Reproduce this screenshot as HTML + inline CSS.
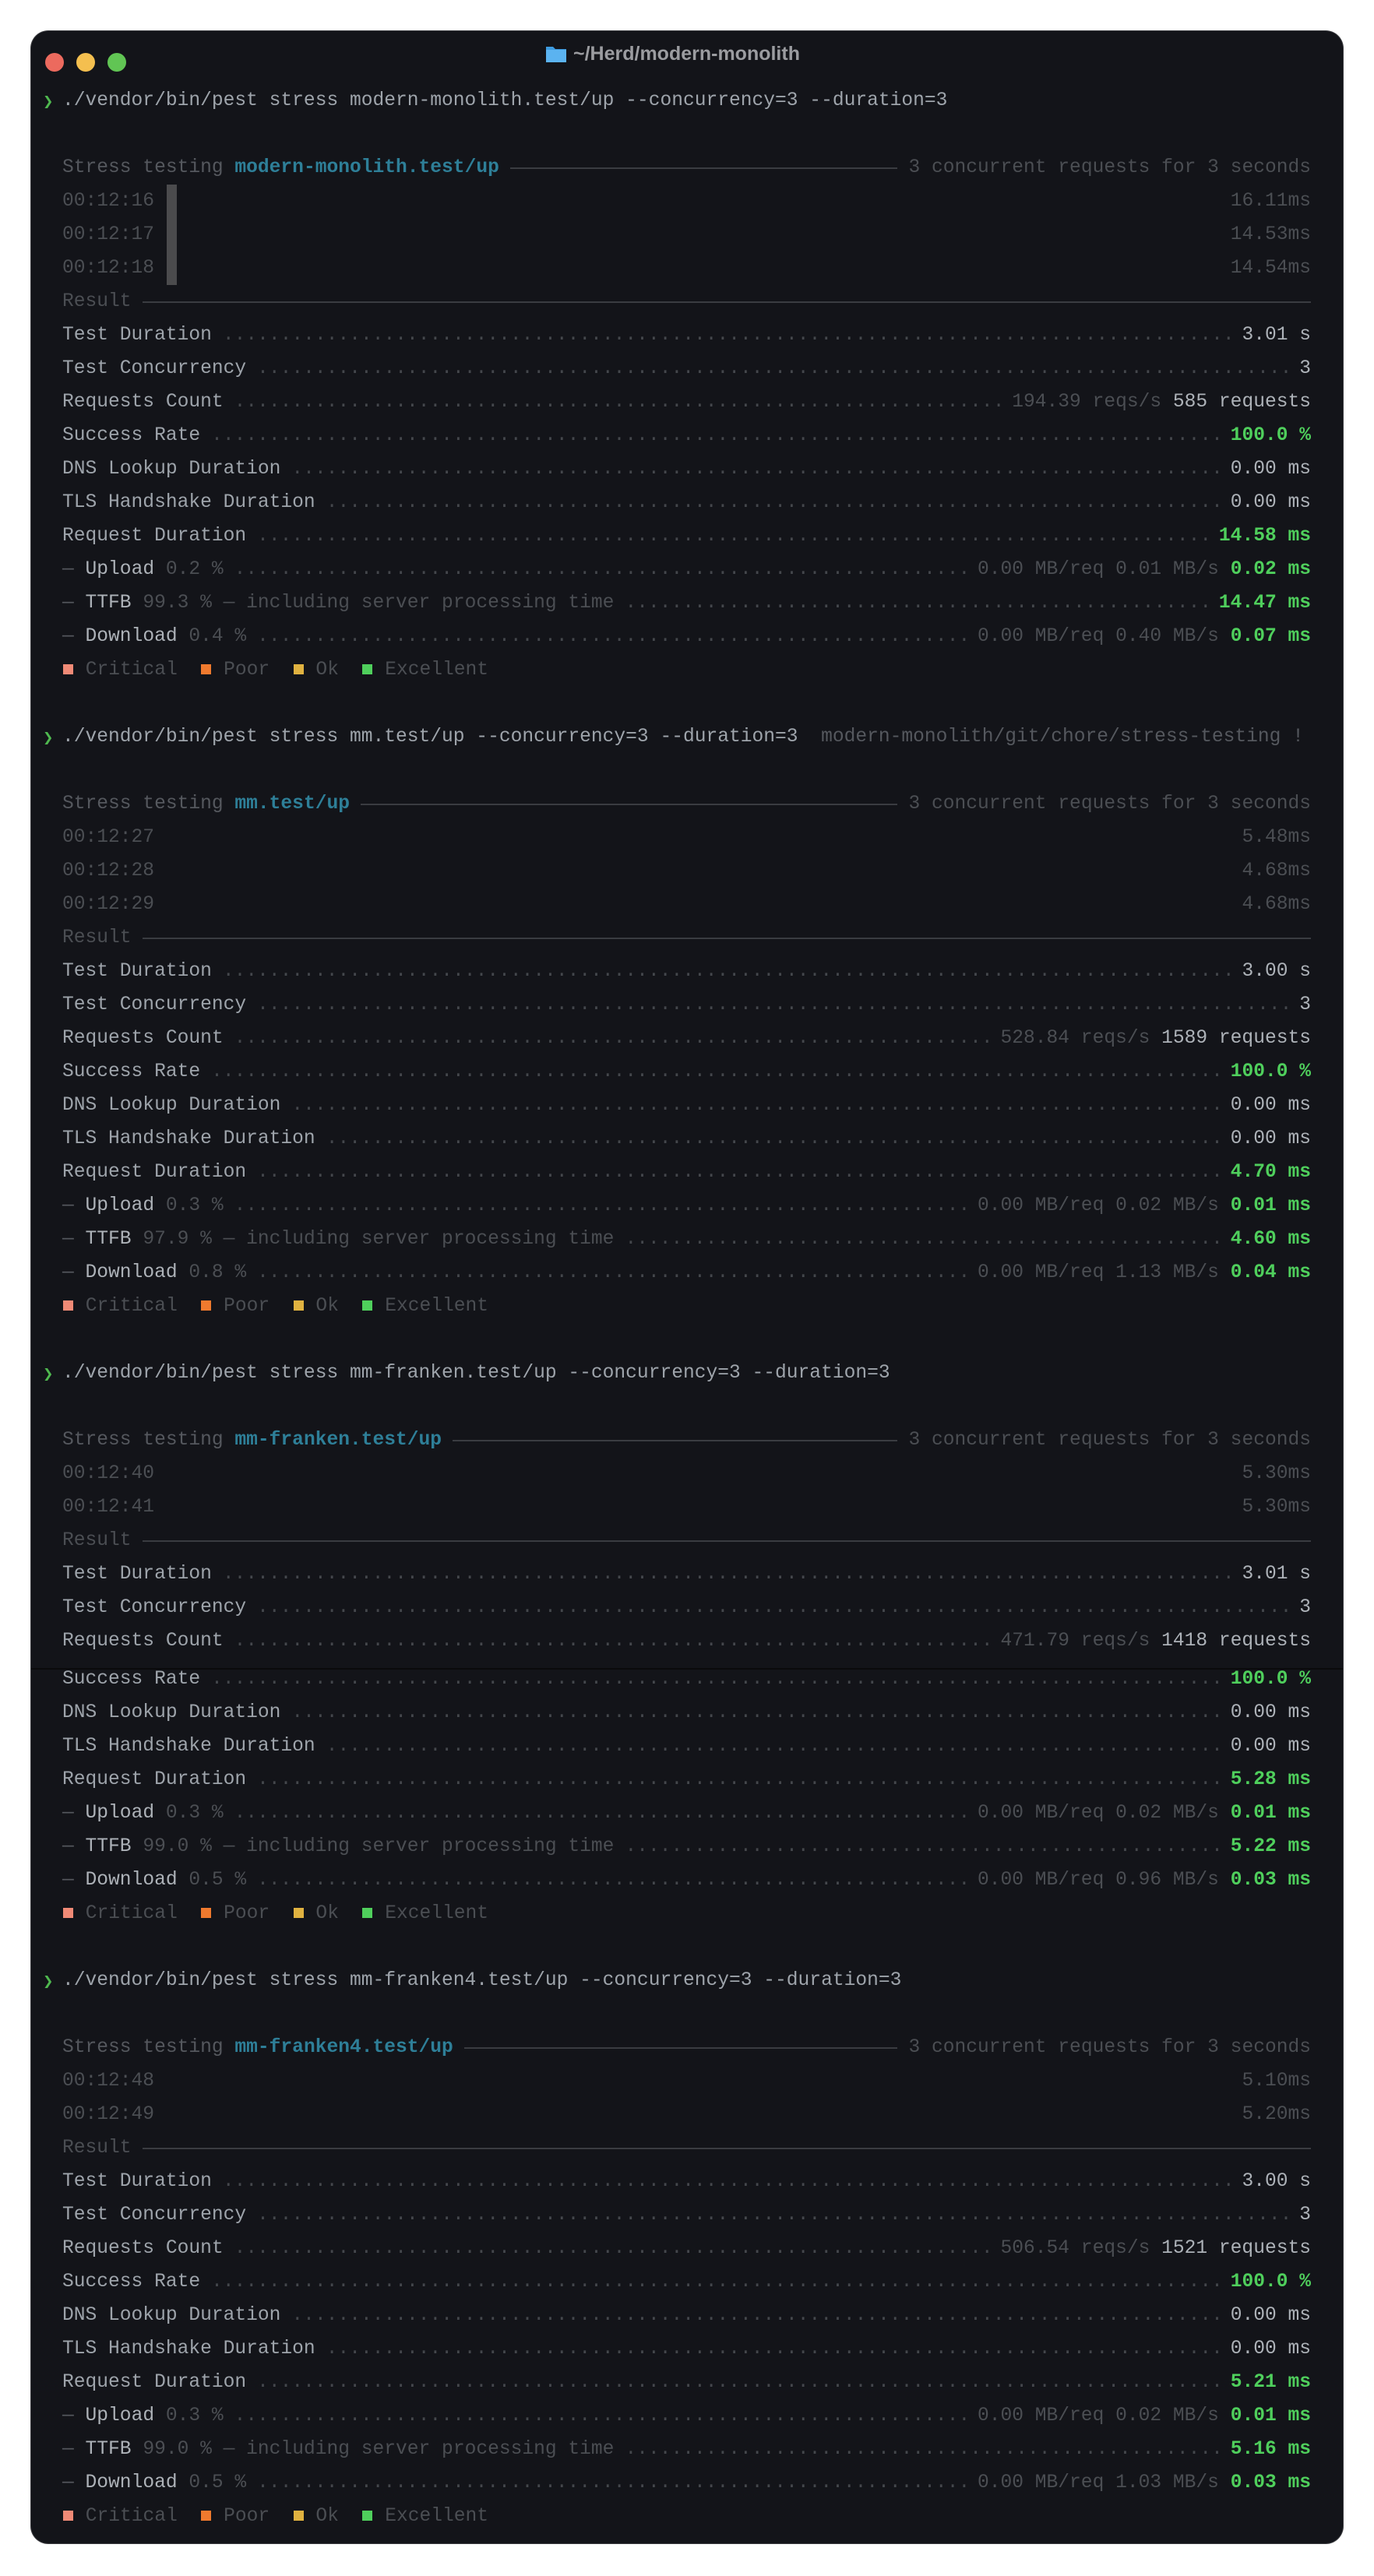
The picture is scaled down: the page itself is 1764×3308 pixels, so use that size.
<!DOCTYPE html>
<html><head><meta charset="utf-8"><style>
html,body{margin:0;padding:0;background:#fff;width:1764px;height:3308px;overflow:hidden}
.win{position:absolute;left:40px;top:40px;width:1684px;height:3226px;background:#131419;border-radius:22px;box-shadow:0 0 0 1px #3a3b3f;overflow:hidden}
.seam{position:absolute;left:40px;top:2142px;width:1684px;height:2px;background:#0a0a0c}
.tl{position:absolute;top:28px;width:24px;height:24px;border-radius:50%}
.title{position:absolute;top:55px;left:700px;width:400px;font:bold 25px "Liberation Sans",sans-serif;color:#9b9ca0;white-space:nowrap}
.content{position:absolute;left:80px;top:108px;width:1603px;font-family:"Liberation Mono",monospace;font-size:24.6px;color:#9ea4ab}
.l{height:43px;line-height:43px;display:flex;white-space:pre;position:relative}
.f{flex:1;min-width:0;overflow:hidden;color:#44474c;margin:0 14px}
.r{flex:1;min-width:0;margin:0 14px;border-top:2px solid #3a3c41;align-self:center;height:0}
.dm{color:#55585e}
.dk{color:#4b4e53}
.c{color:#2e7f98;font-weight:bold}
.g{color:#4fcf5c;font-weight:bold}
.w{color:#adb2b8}
.p{position:absolute;left:-25px;color:#4fb84f;font-family:"DejaVu Sans",sans-serif;font-size:16px;font-weight:bold}
.sq{display:inline-block;width:13px;height:13px;margin:0 1px;vertical-align:0px}
.bar{position:absolute;left:134px;width:13px;background:#4b4b4d}
.sp{height:6px}
</style></head><body>
<div class="win">
<div class="tl" style="left:18px;background:#ec6a5e"></div>
<div class="tl" style="left:58px;background:#f4bf4f"></div>
<div class="tl" style="left:98px;background:#61c554"></div>
</div>
<div class="seam"></div>
<div class="title"><svg width="28" height="24" viewBox="0 0 28 24" style="vertical-align:-4px;margin-right:8px"><path d="M1 3h9l3 3h14v17H1z" fill="#3d9be0"/><path d="M1 7h26v16H1z" fill="#5bb3f0"/></svg>~/Herd/modern-monolith</div>
<div class="content">
<div class="l"><span class="p">❯</span>./vendor/bin/pest stress modern-monolith.test/up --concurrency=3 --duration=3</div>
<div class="l"> </div>
<div class="l"><span class="dm">Stress testing </span><span class="c">modern-monolith.test/up</span><span class="r"></span><span class="dk">3 concurrent requests for 3 seconds</span></div>
<div class="l"><span class="dk">00:12:16</span><span class="bar" style="top:0;height:43px"></span><span style="flex:1"></span><span class="dk">16.11ms</span></div>
<div class="l"><span class="dk">00:12:17</span><span class="bar" style="top:0;height:43px"></span><span style="flex:1"></span><span class="dk">14.53ms</span></div>
<div class="l"><span class="dk">00:12:18</span><span class="bar" style="top:0;height:43px"></span><span style="flex:1"></span><span class="dk">14.54ms</span></div>
<div class="l"><span class="dk">Result</span><span class="r" style="margin-right:0"></span></div>
<div class="l">Test Duration<span class="f">....................................................................................................................</span><span class="w">3.01 s</span></div>
<div class="l">Test Concurrency<span class="f">....................................................................................................................</span><span class="w">3</span></div>
<div class="l">Requests Count<span class="f">....................................................................................................................</span><span class="dk">194.39 reqs/s </span><span class="w">585 requests</span></div>
<div class="l">Success Rate<span class="f">....................................................................................................................</span><span class="g">100.0 %</span></div>
<div class="l">DNS Lookup Duration<span class="f">....................................................................................................................</span><span class="w">0.00 ms</span></div>
<div class="l">TLS Handshake Duration<span class="f">....................................................................................................................</span><span class="w">0.00 ms</span></div>
<div class="l">Request Duration<span class="f">....................................................................................................................</span><span class="g">14.58 ms</span></div>
<div class="l"><span class="dm">— </span><span class="w">Upload</span><span class="dk"> 0.2 %</span><span class="f">....................................................................................................................</span><span class="dk">0.00 MB/req 0.01 MB/s </span><span class="g">0.02 ms</span></div>
<div class="l"><span class="dm">— </span><span class="w">TTFB</span><span class="dk"> 99.3 % — including server processing time</span><span class="f">....................................................................................................................</span><span class="g">14.47 ms</span></div>
<div class="l"><span class="dm">— </span><span class="w">Download</span><span class="dk"> 0.4 %</span><span class="f">....................................................................................................................</span><span class="dk">0.00 MB/req 0.40 MB/s </span><span class="g">0.07 ms</span></div>
<div class="l"><span class="dk"><span class="sq" style="background:#f08a76"></span> Critical  <span class="sq" style="background:#f07a2e"></span> Poor  <span class="sq" style="background:#e0b240"></span> Ok  <span class="sq" style="background:#4fcf5c"></span> Excellent</span></div>
<div class="l"> </div>
<div class="l"><span class="p">❯</span>./vendor/bin/pest stress mm.test/up --concurrency=3 --duration=3  <span class="dm">modern-monolith/git/chore/stress-testing !</span></div>
<div class="l"> </div>
<div class="l"><span class="dm">Stress testing </span><span class="c">mm.test/up</span><span class="r"></span><span class="dk">3 concurrent requests for 3 seconds</span></div>
<div class="l"><span class="dk">00:12:27</span><span style="flex:1"></span><span class="dk">5.48ms</span></div>
<div class="l"><span class="dk">00:12:28</span><span style="flex:1"></span><span class="dk">4.68ms</span></div>
<div class="l"><span class="dk">00:12:29</span><span style="flex:1"></span><span class="dk">4.68ms</span></div>
<div class="l"><span class="dk">Result</span><span class="r" style="margin-right:0"></span></div>
<div class="l">Test Duration<span class="f">....................................................................................................................</span><span class="w">3.00 s</span></div>
<div class="l">Test Concurrency<span class="f">....................................................................................................................</span><span class="w">3</span></div>
<div class="l">Requests Count<span class="f">....................................................................................................................</span><span class="dk">528.84 reqs/s </span><span class="w">1589 requests</span></div>
<div class="l">Success Rate<span class="f">....................................................................................................................</span><span class="g">100.0 %</span></div>
<div class="l">DNS Lookup Duration<span class="f">....................................................................................................................</span><span class="w">0.00 ms</span></div>
<div class="l">TLS Handshake Duration<span class="f">....................................................................................................................</span><span class="w">0.00 ms</span></div>
<div class="l">Request Duration<span class="f">....................................................................................................................</span><span class="g">4.70 ms</span></div>
<div class="l"><span class="dm">— </span><span class="w">Upload</span><span class="dk"> 0.3 %</span><span class="f">....................................................................................................................</span><span class="dk">0.00 MB/req 0.02 MB/s </span><span class="g">0.01 ms</span></div>
<div class="l"><span class="dm">— </span><span class="w">TTFB</span><span class="dk"> 97.9 % — including server processing time</span><span class="f">....................................................................................................................</span><span class="g">4.60 ms</span></div>
<div class="l"><span class="dm">— </span><span class="w">Download</span><span class="dk"> 0.8 %</span><span class="f">....................................................................................................................</span><span class="dk">0.00 MB/req 1.13 MB/s </span><span class="g">0.04 ms</span></div>
<div class="l"><span class="dk"><span class="sq" style="background:#f08a76"></span> Critical  <span class="sq" style="background:#f07a2e"></span> Poor  <span class="sq" style="background:#e0b240"></span> Ok  <span class="sq" style="background:#4fcf5c"></span> Excellent</span></div>
<div class="l"> </div>
<div class="l"><span class="p">❯</span>./vendor/bin/pest stress mm-franken.test/up --concurrency=3 --duration=3</div>
<div class="l"> </div>
<div class="l"><span class="dm">Stress testing </span><span class="c">mm-franken.test/up</span><span class="r"></span><span class="dk">3 concurrent requests for 3 seconds</span></div>
<div class="l"><span class="dk">00:12:40</span><span style="flex:1"></span><span class="dk">5.30ms</span></div>
<div class="l"><span class="dk">00:12:41</span><span style="flex:1"></span><span class="dk">5.30ms</span></div>
<div class="l"><span class="dk">Result</span><span class="r" style="margin-right:0"></span></div>
<div class="l">Test Duration<span class="f">....................................................................................................................</span><span class="w">3.01 s</span></div>
<div class="l">Test Concurrency<span class="f">....................................................................................................................</span><span class="w">3</span></div>
<div class="l">Requests Count<span class="f">....................................................................................................................</span><span class="dk">471.79 reqs/s </span><span class="w">1418 requests</span></div>
<div class="sp"></div>
<div class="l">Success Rate<span class="f">....................................................................................................................</span><span class="g">100.0 %</span></div>
<div class="l">DNS Lookup Duration<span class="f">....................................................................................................................</span><span class="w">0.00 ms</span></div>
<div class="l">TLS Handshake Duration<span class="f">....................................................................................................................</span><span class="w">0.00 ms</span></div>
<div class="l">Request Duration<span class="f">....................................................................................................................</span><span class="g">5.28 ms</span></div>
<div class="l"><span class="dm">— </span><span class="w">Upload</span><span class="dk"> 0.3 %</span><span class="f">....................................................................................................................</span><span class="dk">0.00 MB/req 0.02 MB/s </span><span class="g">0.01 ms</span></div>
<div class="l"><span class="dm">— </span><span class="w">TTFB</span><span class="dk"> 99.0 % — including server processing time</span><span class="f">....................................................................................................................</span><span class="g">5.22 ms</span></div>
<div class="l"><span class="dm">— </span><span class="w">Download</span><span class="dk"> 0.5 %</span><span class="f">....................................................................................................................</span><span class="dk">0.00 MB/req 0.96 MB/s </span><span class="g">0.03 ms</span></div>
<div class="l"><span class="dk"><span class="sq" style="background:#f08a76"></span> Critical  <span class="sq" style="background:#f07a2e"></span> Poor  <span class="sq" style="background:#e0b240"></span> Ok  <span class="sq" style="background:#4fcf5c"></span> Excellent</span></div>
<div class="l"> </div>
<div class="l"><span class="p">❯</span>./vendor/bin/pest stress mm-franken4.test/up --concurrency=3 --duration=3</div>
<div class="l"> </div>
<div class="l"><span class="dm">Stress testing </span><span class="c">mm-franken4.test/up</span><span class="r"></span><span class="dk">3 concurrent requests for 3 seconds</span></div>
<div class="l"><span class="dk">00:12:48</span><span style="flex:1"></span><span class="dk">5.10ms</span></div>
<div class="l"><span class="dk">00:12:49</span><span style="flex:1"></span><span class="dk">5.20ms</span></div>
<div class="l"><span class="dk">Result</span><span class="r" style="margin-right:0"></span></div>
<div class="l">Test Duration<span class="f">....................................................................................................................</span><span class="w">3.00 s</span></div>
<div class="l">Test Concurrency<span class="f">....................................................................................................................</span><span class="w">3</span></div>
<div class="l">Requests Count<span class="f">....................................................................................................................</span><span class="dk">506.54 reqs/s </span><span class="w">1521 requests</span></div>
<div class="l">Success Rate<span class="f">....................................................................................................................</span><span class="g">100.0 %</span></div>
<div class="l">DNS Lookup Duration<span class="f">....................................................................................................................</span><span class="w">0.00 ms</span></div>
<div class="l">TLS Handshake Duration<span class="f">....................................................................................................................</span><span class="w">0.00 ms</span></div>
<div class="l">Request Duration<span class="f">....................................................................................................................</span><span class="g">5.21 ms</span></div>
<div class="l"><span class="dm">— </span><span class="w">Upload</span><span class="dk"> 0.3 %</span><span class="f">....................................................................................................................</span><span class="dk">0.00 MB/req 0.02 MB/s </span><span class="g">0.01 ms</span></div>
<div class="l"><span class="dm">— </span><span class="w">TTFB</span><span class="dk"> 99.0 % — including server processing time</span><span class="f">....................................................................................................................</span><span class="g">5.16 ms</span></div>
<div class="l"><span class="dm">— </span><span class="w">Download</span><span class="dk"> 0.5 %</span><span class="f">....................................................................................................................</span><span class="dk">0.00 MB/req 1.03 MB/s </span><span class="g">0.03 ms</span></div>
<div class="l"><span class="dk"><span class="sq" style="background:#f08a76"></span> Critical  <span class="sq" style="background:#f07a2e"></span> Poor  <span class="sq" style="background:#e0b240"></span> Ok  <span class="sq" style="background:#4fcf5c"></span> Excellent</span></div>
</div>
</body></html>
